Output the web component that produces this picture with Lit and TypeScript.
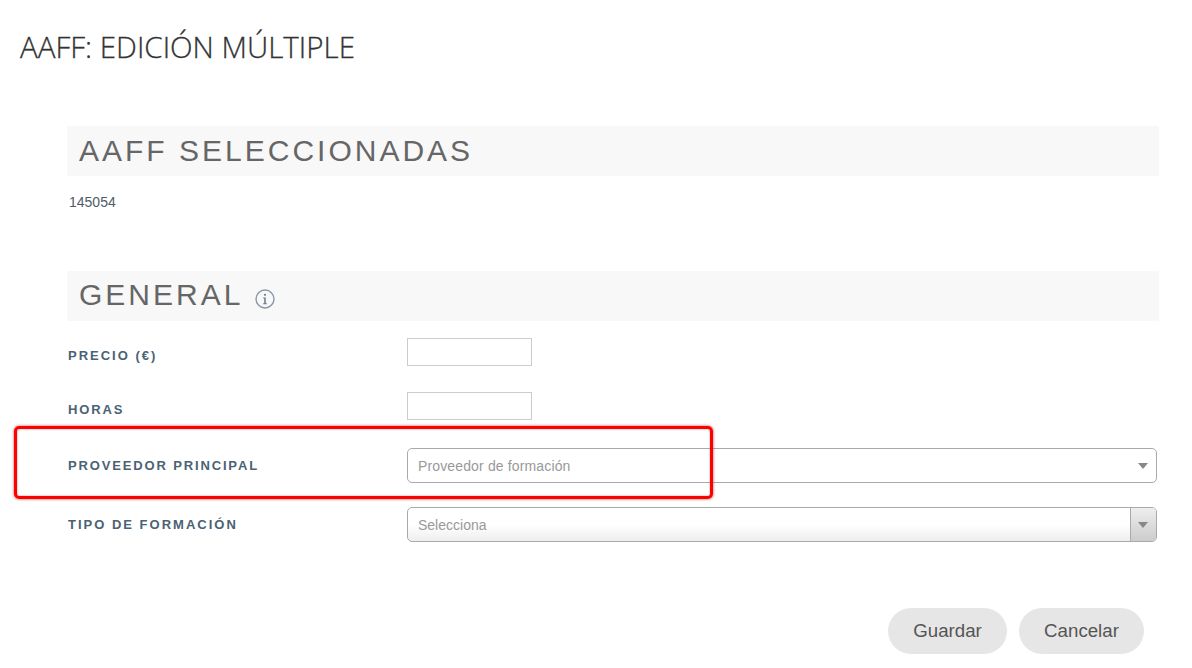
import { LitElement, css, html } from 'lit';
import { customElement } from 'lit/decorators.js';

@customElement('app-root')
export class AppRoot extends LitElement {
  renderArrow() {
    return html`<svg class="arrow" width="10" height="6" viewBox="0 0 10 6"><path d="M0 0h10L5 6z" fill="#888"></path></svg>`;
  }

  render() {
    return html`
      <h1 class="title">AAFF: EDICIÓN MÚLTIPLE</h1>
      <main class="content">
        <h2 class="band">AAFF SELECCIONADAS</h2>
        <p class="ids">145054</p>

        <h2 class="band general">
          <span class="band-text">GENERAL</span>
          <svg class="info" width="20" height="20" viewBox="0 0 20 20">
            <circle cx="10" cy="10" r="9" fill="none" stroke="#8a98a6" stroke-width="1.4"></circle>
            <circle cx="10" cy="5.8" r="1.1" fill="#6d7f90"></circle>
            <path d="M8.2 8.6h2.6v5.6h1.1v1H8.1v-1h1.1V9.6h-1z" fill="#6d7f90"></path>
          </svg>
        </h2>

        <div class="row row-input first">
          <label class="roomy">PRECIO (€)</label>
          <div class="input"></div>
        </div>
        <div class="row row-input second">
          <label>HORAS</label>
          <div class="input"></div>
        </div>
        <div class="row row-select third">
          <label>PROVEEDOR PRINCIPAL</label>
          <div class="select">
            <span class="wide">Proveedor de formación</span>
            <span class="handle">${this.renderArrow()}</span>
          </div>
        </div>
        <div class="row row-select fourth">
          <label class="roomy">TIPO DE FORMACIÓN</label>
          <div class="select shaded">
            <span>Selecciona</span>
            <span class="handle">${this.renderArrow()}</span>
          </div>
        </div>

        <div class="actions">
          <button class="guardar">Guardar</button>
          <button class="cancelar">Cancelar</button>
        </div>
      </main>
      <div class="highlight"></div>
    `;
  }

  static styles = css`
    :host {
      display: block;
      position: relative;
      height: 668px;
      overflow: hidden;
      background: #fff;
      font-family: 'Liberation Sans', Arial, sans-serif;
      color: #555;
    }

    .title {
      margin: 0;
      padding: 29px 0 0 20px;
      height: 96px;
      box-sizing: border-box;
      font-family: 'Open Sans', sans-serif;
      font-size: 29.5px;
      line-height: 36px;
      font-weight: 300;
      color: #333;
      -webkit-text-stroke: 0.3px #333;
    }

    .content {
      display: flex;
      flex-direction: column;
      padding: 30px 33px 0 67px;
    }

    .band {
      display: flex;
      align-items: center;
      gap: 13px;
      margin: 0;
      height: 50px;
      padding-left: 12px;
      background: #f8f8f8;
      font-size: 30px;
      line-height: 50px;
      font-weight: 400;
      letter-spacing: 3px;
      color: #666;
    }

    .band-text {
      margin-top: -2px;
    }

    .ids {
      margin: 18px 0 0 2px;
      height: 77px;
      font-size: 14px;
      line-height: 16px;
      color: #4f5b66;
    }

    .info {
      margin: 6px 0 0 -1px;
    }

    .row {
      display: flex;
      align-items: center;
      padding-left: 1px;
    }

    .row label {
      width: 339px;
      font-size: 13px;
      font-weight: 700;
      letter-spacing: 1.85px;
      color: #4a6274;
    }

    .row label.roomy {
      letter-spacing: 2px;
    }

    .first {
      margin-top: 17px;
    }

    .second {
      margin-top: 26px;
    }

    .third {
      margin-top: 28px;
    }

    .fourth {
      margin-top: 24px;
    }

    .row-input label {
      padding-top: 7px;
    }

    .input {
      width: 125px;
      height: 28px;
      box-sizing: border-box;
      border: 1px solid #ccc;
      background: #fff;
    }

    .select {
      display: flex;
      align-items: center;
      justify-content: space-between;
      width: 750px;
      height: 35px;
      box-sizing: border-box;
      padding-left: 10px;
      border: 1px solid #aaa;
      border-radius: 5px;
      background: #fff;
      font-size: 14px;
      color: #999;
    }

    .wide {
      letter-spacing: 0.14px;
    }

    .handle {
      display: flex;
      align-items: center;
      justify-content: center;
      width: 26px;
      height: 100%;
      padding-right: 1px;
      box-sizing: border-box;
    }

    .shaded {
      background: linear-gradient(#fff 50%, #eee);
    }

    .shaded .handle {
      border-left: 1px solid #aaa;
      border-radius: 0 4px 4px 0;
      background: linear-gradient(#eee, #ccc);
    }

    .actions {
      display: flex;
      justify-content: flex-end;
      gap: 12px;
      margin-top: 66px;
      padding-right: 15px;
    }

    .actions button {
      height: 46px;
      border: 0;
      border-radius: 23px;
      background: #e6e6e6;
      font-family: 'Liberation Sans', Arial, sans-serif;
      font-size: 18.7px;
      color: #555;
      padding: 0;
    }

    .guardar {
      width: 119px;
    }

    .cancelar {
      width: 125px;
    }

    .highlight {
      position: absolute;
      left: 14px;
      top: 426px;
      width: 699px;
      height: 73px;
      box-sizing: border-box;
      border: 3px solid #f00;
      border-radius: 5px;
      box-shadow: 0 0 3px rgba(160, 0, 0, 0.7), inset 0 0 2px rgba(160, 0, 0, 0.5);
    }
  `;
}
